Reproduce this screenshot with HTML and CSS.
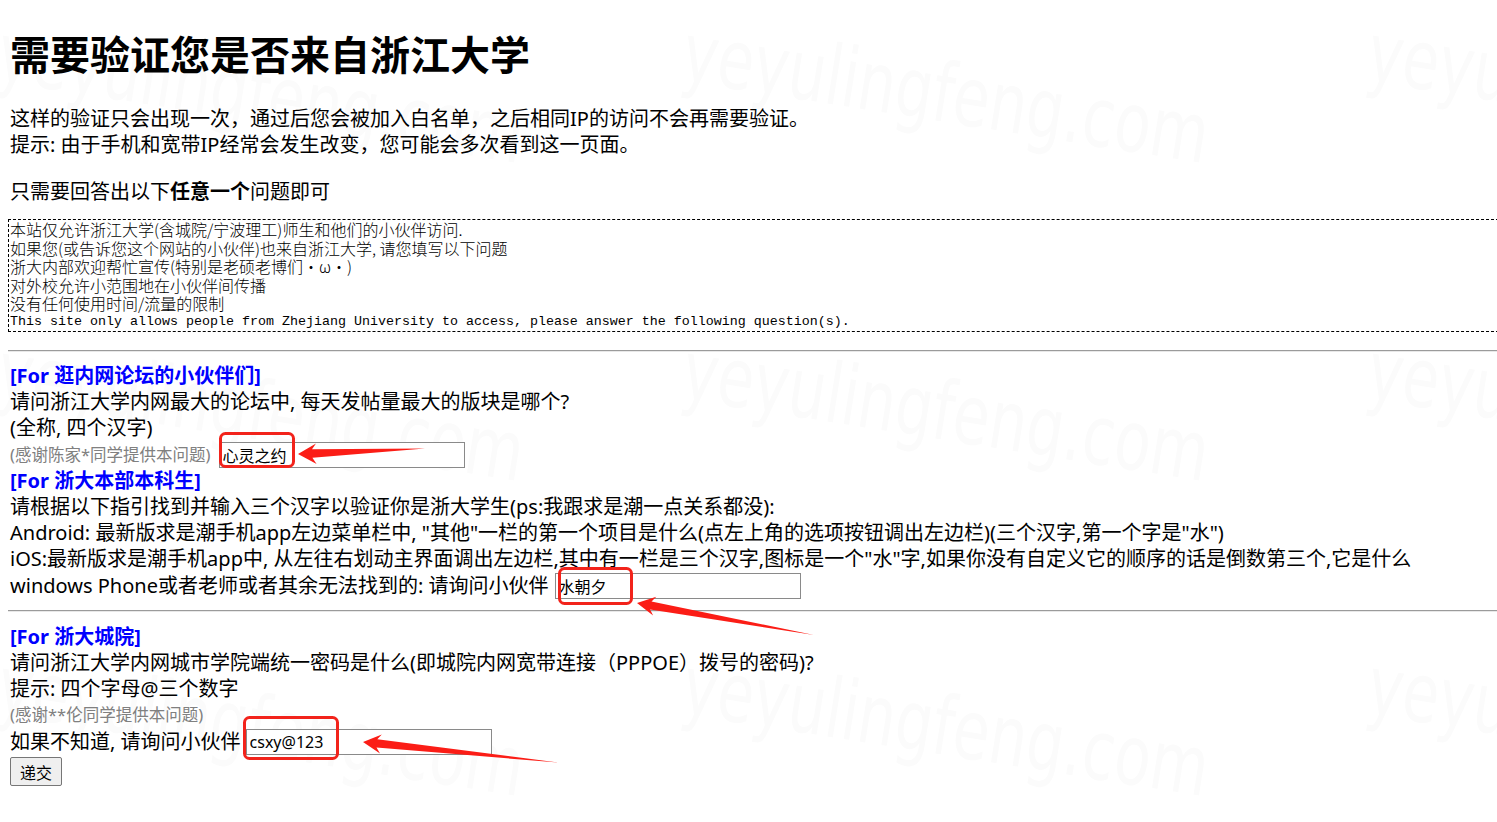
FILE: index.html
```html
<!DOCTYPE html>
<html lang="zh-CN">
<head>
<meta charset="utf-8">
<title>需要验证您是否来自浙江大学</title>
<link rel="stylesheet" href="styles.css">
</head>
<body>
<div class="marks" aria-hidden="true">
  <span class="wm c1 r1">yeyulingfeng.com</span>
  <span class="wm c2 r1">yeyulingfeng.com</span>
  <span class="wm c3 r1">yeyulingfeng.com</span>
  <span class="wm c1 r2">yeyulingfeng.com</span>
  <span class="wm c2 r2">yeyulingfeng.com</span>
  <span class="wm c3 r2">yeyulingfeng.com</span>
  <span class="wm c1 r3">yeyulingfeng.com</span>
  <span class="wm c2 r3">yeyulingfeng.com</span>
  <span class="wm c3 r3">yeyulingfeng.com</span>
</div>
<div class="page">
  <h1 class="title">需要验证您是否来自浙江大学</h1>
  <p class="intro">这样的验证只会出现一次，通过后您会被加入白名单，之后相同IP的访问不会再需要验证。<br>提示: 由于手机和宽带IP经常会发生改变，您可能会多次看到这一页面。</p>
  <p class="intro intro-last">只需要回答出以下<b>任意一个</b>问题即可</p>
  <div class="notice">
    <div class="notice-line">本站仅允许浙江大学(含城院/宁波理工)师生和他们的小伙伴访问.</div>
    <div class="notice-line">如果您(或告诉您这个网站的小伙伴)也来自浙江大学, 请您填写以下问题</div>
    <div class="notice-line">浙大内部欢迎帮忙宣传(特别是老硕老博们·ω·)</div>
    <div class="notice-line">对外校允许小范围地在小伙伴间传播</div>
    <div class="notice-line">没有任何使用时间/流量的限制</div>
    <div class="notice-line notice-en">This site only allows people from Zhejiang University to access, please answer the following question(s).</div>
  </div>
  <hr class="rule rule-first">
  <form class="questions">
    <section class="q">
      <div class="q-title">[For 逛内网论坛的小伙伴们]</div>
      <div class="q-line">请问浙江大学内网最大的论坛中, 每天发帖量最大的版块是哪个?</div>
      <div class="q-line">(全称, 四个汉字)</div>
      <div class="q-row"><span class="thanks">(感谢陈家*同学提供本问题)</span><input class="answer answer-1" type="text" value="心灵之约"></div>
    </section>
    <section class="q">
      <div class="q-title">[For 浙大本部本科生]</div>
      <div class="q-line">请根据以下指引找到并输入三个汉字以验证你是浙大学生(ps:我跟求是潮一点关系都没):</div>
      <div class="q-line">Android: 最新版求是潮手机app左边菜单栏中, "其他"一栏的第一个项目是什么(点左上角的选项按钮调出左边栏)(三个汉字,第一个字是"水")</div>
      <div class="q-line">iOS:最新版求是潮手机app中, 从左往右划动主界面调出左边栏,其中有一栏是三个汉字,图标是一个"水"字,如果你没有自定义它的顺序的话是倒数第三个,它是什么</div>
      <div class="q-row"><span>windows Phone或者老师或者其余无法找到的: 请询问小伙伴</span><input class="answer answer-2" type="text" value="水朝夕"></div>
    </section>
    <hr class="rule rule-second">
    <section class="q">
      <div class="q-title">[For 浙大城院]</div>
      <div class="q-line">请问浙江大学内网城市学院端统一密码是什么(即城院内网宽带连接（PPPOE）拨号的密码)?</div>
      <div class="q-line">提示: 四个字母@三个数字</div>
      <div class="q-line thanks">(感谢**伦同学提供本问题)</div>
      <div class="q-row"><span>如果不知道, 请询问小伙伴</span><input class="answer answer-3" type="text" value="csxy@123"></div>
    </section>
    <button class="submit" type="button">递交</button>
  </form>
</div>
<svg class="annot" width="1497" height="822" viewBox="0 0 1497 822" aria-hidden="true">
  <g fill="none" stroke="#f2231b" stroke-width="3">
    <rect x="220.5" y="433.5" width="73" height="33" rx="5"/>
    <rect x="559.5" y="568.5" width="72" height="35" rx="5"/>
    <rect x="244.5" y="717.5" width="93" height="41" rx="5"/>
  </g>
  <g fill="#fb1d16">
    <polygon points="298,454 316,443.5 312,449.2 425,448.5 312.4,457.8 316.6,464"/>
    <polygon points="637,603 656.3,596.8 651.5,601.4 814,635 650.1,609.6 653.1,615.6"/>
    <polygon points="363,742 381.8,734.6 377.3,739.2 558,762.5 376.5,747.6 380,753.4"/>
  </g>
</svg>
</body>
</html>
```
FILE: styles.css
```css
html {
  overflow: hidden;
  background: #fff;
}

body {
  margin: 0 -12px 0 8px;
  font-family: "Noto Sans", "Noto Sans CJK SC", sans-serif;
  font-size: 20px;
  line-height: 26px;
  color: #000;
}

.page {
  padding-top: 27px;
}

.title {
  margin: 0 0 27px;
  padding-left: 2px;
  font-family: "Noto Sans CJK SC", sans-serif;
  font-size: 40px;
  line-height: 52px;
  font-weight: 700;
}

.intro {
  margin: 0 0 20px;
  padding-left: 2px;
}

.intro b {
  font-family: "Noto Sans CJK SC", sans-serif;
  font-weight: 700;
}

.intro-last {
  margin-bottom: 14px;
}

.notice {
  border: 1px dashed #000;
  font-family: "Noto Sans CJK SC", sans-serif;
  font-weight: 300;
  font-size: 16px;
  line-height: 18.5px;
}

.notice-line {
  white-space: nowrap;
  padding-left: 1px;
}

.notice-en {
  font-family: "Liberation Mono", monospace;
  font-size: 13.33px;
  font-weight: 400;
}

.rule {
  height: 0;
  border: 0;
  border-top: 1px solid #9b9b9b;
  border-bottom: 1px solid #e8e8e8;
}

.rule-first {
  margin: 18px 0 11px;
}

.rule-second {
  margin: 11px 0 12px;
}

.q {
  padding-left: 2px;
}

.q-title {
  color: #0000ff;
  font-weight: 700;
  line-height: 26px;
}

.q-line {
  line-height: 26px;
  white-space: nowrap;
}

.q-row {
  display: flex;
  align-items: center;
  height: 27px;
  white-space: nowrap;
}

.thanks {
  color: #808080;
  font-size: 16.5px;
}

.answer {
  box-sizing: border-box;
  height: 26px;
  width: 246px;
  margin: 0;
  padding: 0 3px;
  border: 1px solid #8a8a8a;
  border-radius: 0;
  background: #fff;
  font-family: "Noto Sans", "Noto Sans CJK SC", sans-serif;
  font-size: 16px;
  color: #000;
}

.answer-1 {
  margin-left: 8px;
}

.answer-2 {
  margin-left: 6px;
}

.answer-3 {
  margin-left: 5px;
}

.submit {
  display: block;
  margin: 2px 0 0 2px;
  height: 29px;
  padding: 0 9px;
  border: 1px solid #767676;
  border-radius: 2px;
  background: #efefef;
  font-family: "Noto Sans CJK SC", sans-serif;
  font-size: 16px;
  color: #000;
}

.marks {
  position: absolute;
  left: 0;
  top: 0;
  width: 1497px;
  height: 822px;
  overflow: hidden;
  z-index: -1;
  pointer-events: none;
}

.wm {
  position: absolute;
  font-family: "Liberation Sans Narrow", "DejaVu Sans Condensed", sans-serif;
  font-size: 66px;
  line-height: 1;
  color: #fbfbfb;
  white-space: nowrap;
  transform: rotate(9deg) scaleY(1.25);
  transform-origin: left top;
}

.c1 { left: 5px; }
.c2 { left: 690px; }
.c3 { left: 1375px; }
.r1 { top: 12px; }
.r2 { top: 330px; }
.r3 { top: 645px; }

.annot {
  position: absolute;
  left: 0;
  top: 0;
  pointer-events: none;
}
```
